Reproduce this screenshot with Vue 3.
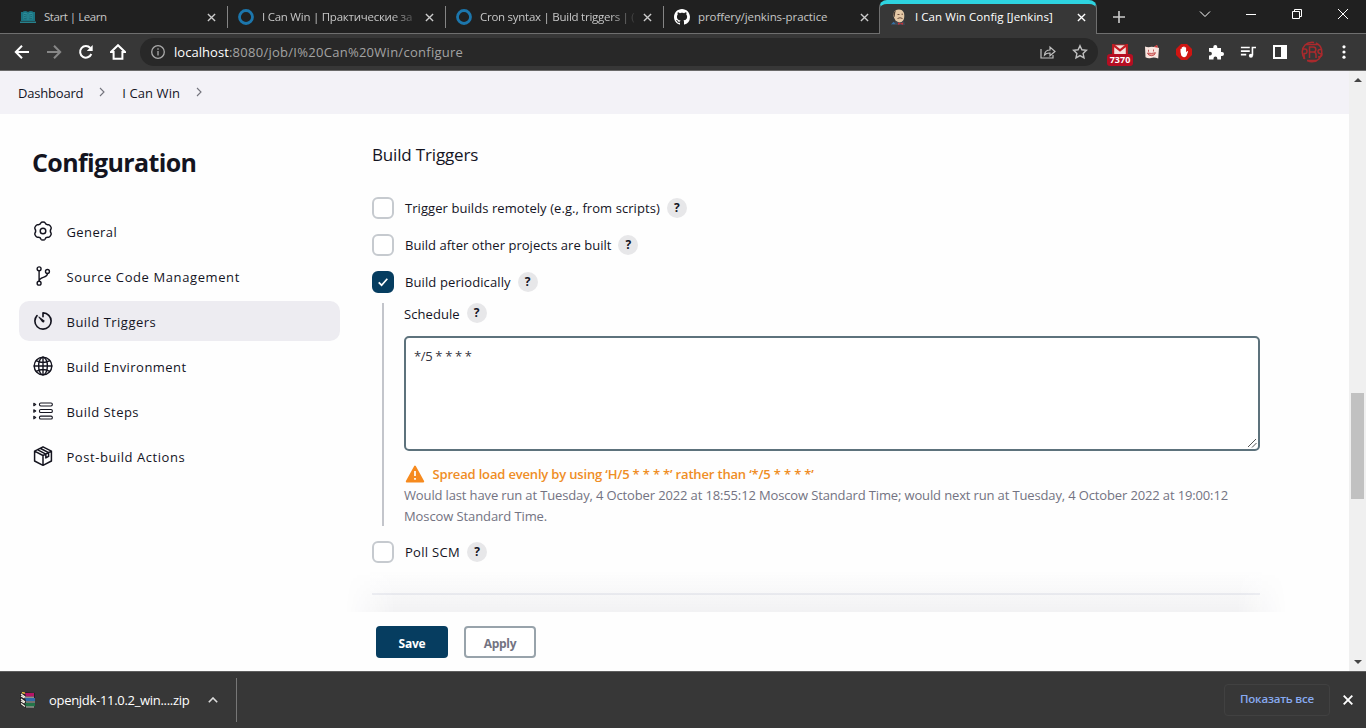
<script setup>
const nav = [
  { label: 'General', icon: 'gear', cls: 'n-general' },
  { label: 'Source Code Management', icon: 'branch', cls: 'n-scm' },
  { label: 'Build Triggers', icon: 'timer', cls: 'n-triggers', active: true },
  { label: 'Build Environment', icon: 'globe', cls: 'n-env' },
  { label: 'Build Steps', icon: 'list', cls: 'n-steps' },
  { label: 'Post-build Actions', icon: 'box', cls: 'n-post' },
]
const triggers = [
  { label: 'Trigger builds remotely (e.g., from scripts)', cls: 't-remote' },
  { label: 'Build after other projects are built', cls: 't-after' },
  { label: 'Build periodically', cls: 't-period', checked: true },
]
</script>

<template>
  <div class="window">
    <header class="tabstrip">
      <div class="tab">
        <svg class="fav" viewBox="0 0 16 16"><path d="M1 3h2V2.400Q6 1.600 8 3 10 1.600 13 2.400V3h2v9H1z" fill="#1b7482"/><path d="M3.500 4q2.500-.7 4 .7v6.500q-1.500-1.300-4-.7zM12.500 4q-2.500-.7-4 .7v6.500q1.500-1.300 4-.7z" fill="#2c8f9b"/><path d="M4 5.500l3 .6M4 7.500l3 .6M4 9.300l3 .6M12 5.500l-3 .6M12 7.500l-3 .6M12 9.300l-3 .6" stroke="#16606d" stroke-width=".8"/><path d="M0 12.500h16V14H0z" fill="#27818d"/></svg>
        <span class="title tt1">Start | Learn</span>
        <svg class="x" viewBox="0 0 10 10"><path d="M1 1l8 8M9 1L1 9"/></svg>
      </div>
      <div class="tab">
        <svg class="fav" viewBox="0 0 16 16"><circle cx="8" cy="8" r="6.500" fill="none" stroke="#1c76ac" stroke-width="2.800"/></svg>
        <span class="title fade tt2">I Can Win | Практические за</span>
        <svg class="x" viewBox="0 0 10 10"><path d="M1 1l8 8M9 1L1 9"/></svg>
      </div>
      <div class="tab">
        <svg class="fav" viewBox="0 0 16 16"><circle cx="8" cy="8" r="6.500" fill="none" stroke="#1c76ac" stroke-width="2.800"/></svg>
        <span class="title fade tt3">Cron syntax | Build triggers | (</span>
        <svg class="x" viewBox="0 0 10 10"><path d="M1 1l8 8M9 1L1 9"/></svg>
      </div>
      <div class="tab last">
        <svg class="fav" viewBox="0 0 16 16"><path fill="#fff" d="M8 0C3.580 0 0 3.580 0 8c0 3.540 2.290 6.530 5.470 7.590.4.07.55-.17.55-.38 0-.19-.01-.82-.01-1.490-2.010.37-2.530-.49-2.690-.94-.09-.23-.48-.94-.82-1.130-.28-.15-.68-.52-.01-.53.63-.01 1.080.58 1.230.82.72 1.210 1.870.87 2.330.66.07-.52.28-.87.51-1.070-1.780-.2-3.640-.89-3.640-3.950 0-.87.31-1.590.82-2.150-.08-.2-.36-1.020.08-2.120 0 0 .67-.21 2.200.82.64-.18 1.320-.27 2-.27s1.360.09 2 .27c1.530-1.040 2.200-.82 2.200-.82.44 1.100.16 1.920.08 2.120.51.56.82 1.270.82 2.150 0 3.070-1.870 3.750-3.650 3.950.29.25.54.73.54 1.480 0 1.070-.01 1.930-.01 2.200 0 .21.15.46.55.38A8.010 8.010 0 0016 8c0-4.420-3.580-8-8-8z"/></svg>
        <span class="title tt4">proffery/jenkins-practice</span>
        <svg class="x" viewBox="0 0 10 10"><path d="M1 1l8 8M9 1L1 9"/></svg>
      </div>
      <div class="tab active">
        <svg class="fav" viewBox="0 0 16 16"><path d="M2.500 7Q2 2 6 .8q5-1.200 7 3.200.8 4-.5 7-1.500 3-5 2.500Q4 12.500 2.500 7z" fill="#e4c8a6"/><path d="M2.600 6Q2 3 5 1.200q-1 2-1 4l-.4 3q-1-.6-1-2.200z" fill="#4a3b32"/><path d="M6.500 5.500h2M10.500 5.200h1.500M6.500 9.500q2.500-1.500 5 0" stroke="#6b4c3c" fill="none"/><path d="M2 16q.5-3 3-4l4 2 3-2q2 1 2 4z" fill="#414652"/><path d="M7 13.500l2.500 1 2.500-1v2.200l-2.500-.7-2.500.7z" fill="#c63137"/><path d="M0 15.500l2.500-2.700L4.500 15z" fill="#3471a4"/></svg>
        <span class="title tt5">I Can Win Config [Jenkins]</span>
        <svg class="x" viewBox="0 0 10 10"><path d="M1 1l8 8M9 1L1 9"/></svg>
      </div>
      <svg class="plus" viewBox="0 0 12 12"><path d="M6 0v12M0 6h12"/></svg>
      <div class="winctl">
        <svg viewBox="0 0 12 12"><path d="M1 3.500l5 5 5-5"/></svg>
        <svg viewBox="0 0 12 12"><path d="M1 6.500h10"/></svg>
        <svg viewBox="0 0 12 12"><path d="M1.500 3.500h7v7h-7zM3.500 3.500v-2h7v7h-2"/></svg>
        <svg viewBox="0 0 12 12"><path d="M1 1l10 10M11 1L1 11"/></svg>
      </div>
    </header>

    <div class="toolbar">
      <svg class="nv" viewBox="0 0 16 16"><path d="M15 8H2M8 1.800L1.800 8 8 14.200"/></svg>
      <svg class="nv dim" viewBox="0 0 16 16"><path d="M1 8h13M8 1.800L14.200 8 8 14.200"/></svg>
      <svg class="nv" viewBox="0 0 16 16"><path d="M13.300 10a5.800 5.800 0 1 1-1-6"/><path d="M14.700 1v6H8.800z" fill="#fff" stroke="none"/></svg>
      <svg class="nv" viewBox="0 0 16 16"><path d="M8 1.200L1 8h2.600v6.800h8.800V8H15z"/></svg>
      <div class="omni">
        <svg class="info" viewBox="0 0 16 16"><circle cx="8" cy="8" r="6.300"/><path d="M8 7v4.500M8 4.300v1.500"/></svg>
        <span class="url"><b>localhost</b>:8080/job/I%20Can%20Win/configure</span>
        <svg class="share" viewBox="0 0 16 16"><path d="M1 5v9h12v-3M4.500 11Q5 6 10 6V3l5 4.500-5 4.300V9q-3.500-.2-5.500 2z"/></svg>
        <svg class="star" viewBox="0 0 16 16"><path d="M8 1.700l1.900 4.100 4.500.5-3.300 3.100.9 4.400L8 11.600l-4 2.200.9-4.400L1.600 6.300l4.500-.5z"/></svg>
      </div>
      <div class="ext">
        <div class="mail">
          <svg viewBox="0 0 18 14"><path d="M1 1h16v12H1z" fill="#f3e3df"/><path d="M1 13V1l8 6.500L17 1v12" fill="none" stroke="#c51b22" stroke-width="2.500"/><path d="M2 1h14" stroke="#a9161c"/></svg>
          <span class="badge">7370</span>
        </div>
        <svg viewBox="0 0 16 16"><path d="M1 2.500q3 1.200 6.500.3L10 3l3-2 .7 2.500L15 4l-.8 10.500Q10 13 7 14q-3 .7-5.500-.7z" fill="#f9e5df"/><path d="M10 3l3-2.300.8 3z" fill="#cb3434"/><path d="M4.500 5.800v2M9.500 5.500v2M3.500 9q4 1 8-.3-.6 3-4 3t-4-2.700z" stroke="#b93436" stroke-width=".8" fill="#eaa19a"/></svg>
        <svg viewBox="0 0 16 16"><path d="M5 0h6l5 5v6l-5 5H5l-5-5V5z" fill="#cf1512"/><path d="M4.500 8V5q.7-.8 1.300 0V3.300q.8-.8 1.400 0V2.800q.8-.8 1.500 0v.7q.8-.7 1.400.1v4.600l1-1q1-.3.900.5L10.400 12q-2.600 2.500-5-.2z" fill="#fff"/></svg>
        <svg viewBox="0 0 16 16"><path d="M1 4h4.300V3a2 2 0 0 1 4 0v1H13v4h1a2 2 0 0 1 0 4h-1v3.500H9.300v-1a1.900 1.900 0 0 0-3.800 0v1H1v-4h1a1.900 1.900 0 0 0 0-3.800H1z" fill="#fff"/></svg>
        <svg viewBox="0 0 18 16"><path d="M1 3h10M1 7h10M1 11h6M14 12V3h4" stroke="#fff" stroke-width="1.800" fill="none"/><circle cx="12.300" cy="12.200" r="2.300" fill="#fff"/></svg>
        <svg viewBox="0 0 16 16"><path d="M1 1h14v14H1zM3 3v10h6V3z" fill="#fff" fill-rule="evenodd"/></svg>
        <svg class="avatar" viewBox="0 0 22 22"><circle cx="11" cy="11" r="9.800" stroke-dasharray="20 3 25 2"/><path d="M1 8h3q2 0 2 2.300T4 12.500H3V18M8.500 17V6h4q2.300 0 2.300 2.500T12.500 11H8.500m4 0q2.500 0 2.500 3v3M21 8.500h-2q-2 0-2 2t4 2.500q0 3-4 3M5 3.500h12M6 19.500h10"/></svg>
        <svg class="dots" viewBox="0 0 16 16"><circle cx="8" cy="2.800" r="1.600"/><circle cx="8" cy="8" r="1.600"/><circle cx="8" cy="13.200" r="1.600"/></svg>
      </div>
    </div>

    <div class="viewport">
      <div class="page">
        <nav class="crumbs">
          <span class="c1">Dashboard</span>
          <svg viewBox="0 0 6 10"><path d="M1 1l4 4-4 4"/></svg>
          <span class="c2">I Can Win</span>
          <svg viewBox="0 0 6 10"><path d="M1 1l4 4-4 4"/></svg>
        </nav>
        <div class="body">
          <aside class="side">
            <h1>Configuration</h1>
            <a v-for="n in nav" :key="n.label" class="item" :class="{ on: n.active }">
              <svg v-if="n.icon === 'gear'" class="gear" viewBox="0 0 20 20"><circle cx="10" cy="10" r="2.800"/><path d="M8 1.800Q8.300 1 10 1T12 1.800C12.600 3.600 13.600 4 15.400 3.700 16.600 3.400 18.600 6.400 18.200 7.400 17.100 9 17.100 11 18.200 12.600 18.600 13.600 16.600 16.600 15.400 16.300 13.600 16 12.600 16.400 12 18.200Q11.700 19 10 19T8 18.200C7.400 16.400 6.400 16 4.600 16.300 3.400 16.600 1.400 13.600 1.800 12.600 2.900 11 2.900 9 1.800 7.400 1.400 6.400 3.400 3.400 4.600 3.700 6.400 4 7.400 3.600 8 1.800Z"/></svg>
              <svg v-else-if="n.icon === 'branch'" viewBox="0 0 512 512"><circle cx="156" cy="72" r="50"/><circle cx="156" cy="440" r="50"/><circle cx="370" cy="140" r="50"/><path d="M156 122v268M370 190c0 130-214 70-214 200"/></svg>
              <svg v-else-if="n.icon === 'timer'" class="bold" viewBox="0 0 512 512"><path d="M103 118A208 208 0 0 0 48 254c-1 115 93 210 208 210s208-93 208-208c0-113-91-205-203-208h-5v100"/><path class="fill" d="M233 284L136 156q0-18 18-16l129 96a34 34 0 0 1-50 48z"/></svg>
              <svg v-else-if="n.icon === 'globe'" viewBox="0 0 512 512"><circle cx="256" cy="256" r="226"/><ellipse cx="256" cy="256" rx="112" ry="226"/><path d="M256 30v452M30 256h452M82 120q174 90 348 0M82 392q174-90 348 0"/></svg>
              <svg v-else-if="n.icon === 'list'" viewBox="0 0 512 512"><g class="thin"><rect x="165" y="50" width="330" height="76" rx="34"/><rect x="165" y="218" width="330" height="76" rx="34"/><rect x="165" y="386" width="330" height="76" rx="34"/><path d="M20 56l50 32-50 32zM20 224l50 32-50 32zM20 392l50 32-50 32z"/></g></svg>
              <svg v-else viewBox="16 16 480 480"><path d="M256 36l202 104v236L256 480 54 376V140zM54 140l202 104 202-104M256 244v236M120 105l204 106v92l66-36v-92L188 70"/></svg>
              <span :class="n.cls">{{ n.label }}</span>
            </a>
          </aside>
          <main class="main">
            <h2>Build Triggers</h2>
            <div v-for="t in triggers" :key="t.label" class="row">
              <span class="box" :class="{ checked: t.checked }"><svg v-if="t.checked" viewBox="0 0 12 12"><path d="M1.700 6.300l2.900 2.900 5.700-6.500"/></svg></span>
              <span class="lab" :class="t.cls">{{ t.label }}</span>
              <span class="help">?</span>
            </div>
            <section class="nested">
              <div class="sched"><span class="lab">Schedule</span><span class="help">?</span></div>
              <div class="area">
                <span>*/5 * * * *</span>
                <svg viewBox="0 0 10 10"><path d="M1 9l8-8M5 9.500L9.500 5"/></svg>
              </div>
              <div class="warn">
                <svg viewBox="0 0 20 18"><path d="M10 1.500L18.300 16.500H1.700z" fill="#f68a1e" stroke="#f68a1e" stroke-width="1.800" stroke-linejoin="round"/><path d="M10 6v5M10 13v1.800" stroke="#fff" stroke-width="1.700"/></svg>
                <strong>Spread load evenly by using ‘H/5 * * * *’ rather than ‘*/5 * * * *’</strong>
              </div>
              <p><span class="p1">Would last have run at Tuesday, 4 October 2022 at 18:55:12 Moscow Standard Time; would next run at Tuesday, 4 October 2022 at 19:00:12</span><br><span class="p2">Moscow Standard Time.</span></p>
            </section>
            <div class="row poll">
              <span class="box"></span><span class="lab t-poll">Poll SCM</span><span class="help">?</span>
            </div>
            <div class="rule"></div>
          </main>
        </div>
        <footer class="foot">
          <div class="buttons">
            <button class="save">Save</button>
            <button class="apply">Apply</button>
          </div>
        </footer>
      </div>
      <div class="scroll">
        <svg viewBox="0 0 8 4"><path d="M0 4l4-4 4 4z"/></svg>
        <div class="track"><div class="thumb"></div></div>
        <svg viewBox="0 0 8 4"><path d="M0 0l4 4 4-4z"/></svg>
      </div>
    </div>

    <div class="downloads">
      <svg class="rar" viewBox="0 0 16 16"><path d="M0 1l5-1 10 1v14l-9 1-6-3z" fill="#242024"/><path d="M5 1h9v3.500H6z" fill="#b51566"/><path d="M5 6h10v3H6z" fill="#2f6ba8"/><path d="M5 11h10v3.500H6z" fill="#227449"/><path d="M5 5.200h9M6 10h9M6 15h8" stroke="#d8d8cf" stroke-width=".9"/><path d="M1 2l4 3M1 7l4 3M1 11.500l4 3M1 4l3.500 2M1 9l3.500 2" stroke="#f5f1e7" stroke-width="1.200"/><path d="M2 .5l3 .8" stroke="#e6b93e" stroke-width="1.500"/></svg>
      <span class="file">openjdk-11.0.2_win....zip</span>
      <svg class="caret" viewBox="0 0 10 6"><path d="M.8 5.200L5 1l4.200 4.200"/></svg>
      <i class="sep"></i>
      <button class="all">Показать все</button>
      <svg class="close" viewBox="0 0 10 10"><path d="M.7.7l8.600 8.600M9.300.7L.7 9.300"/></svg>
    </div>
  </div>
</template>

<style>
html, body { margin: 0; overflow: hidden; }
</style>

<style scoped>
.window { width: 1366px; height: 728px; display: flex; flex-direction: column; overflow: hidden; font-family: "Open Sans", "Noto Sans", sans-serif; color: #14141f; background: #fefefe; }
.window * { box-sizing: border-box; }
svg { display: block; flex: none; }
span, strong { white-space: nowrap; }
button { font-family: inherit; padding: 0; }

.tabstrip { height: 34px; flex: none; display: flex; background: #202020; border-bottom: 1px solid #6f6f6f; color: #c6c6c6; font-size: 11.500px; }
.tab { width: 218px; padding: 1px 11px 0 10px; display: flex; align-items: center; flex: none; border-style: solid; border-width: 0 1px 0 0; border-image: linear-gradient(transparent 7px, #858585 7px, #858585 27px, transparent 27px) 1; }
.tab:first-child { width: 228px; padding-left: 20px; }
.tab.last { width: 216px; border: 0; padding-right: 11px; }
.fav { width: 16px; height: 16px; margin-right: 8px; }
.title { flex: 1; line-height: 18px; min-width: 0; }
.title.fade { -webkit-mask-image: linear-gradient(90deg, #000 84%, transparent 102%); mask-image: linear-gradient(90deg, #000 84%, transparent 102%); }
.tt1 { letter-spacing: -0.460px; }
.tt2 { letter-spacing: -0.250px; }
.tt3 { letter-spacing: -0.260px; }
.tt4 { letter-spacing: -0.090px; }
.tt5 { letter-spacing: 0.060px; }
.x { width: 9px; height: 9px; stroke: #ccc; stroke-width: 1.500; fill: none; margin-left: 8px; }
.tab.active { width: 218px; height: 34px; padding: 0 9px 4px 11px; background: #373737; border: 1px solid #6f6f6f; border-image: none; border-bottom: 0; border-top: 4px solid #2ed3e0; border-radius: 8px 8px 0 0; color: #fff; z-index: 1; margin-left: -1px; }
.active .x { stroke: #fff; margin-right: 1px; }
.plus { width: 12px; height: 12px; margin: 11px 0 0 16px; stroke: #ccc; stroke-width: 1.600; }
.winctl { margin-left: auto; margin-right: 17px; display: flex; gap: 34px; padding-top: 8px; }
.winctl svg { width: 12px; height: 12px; fill: none; stroke: #fff; stroke-width: 1; }

.toolbar { height: 37px; flex: none; background: #373737; border-bottom: 1px solid #6a6a6a; display: flex; align-items: center; padding: 0 14px; gap: 16px; }
.nv { width: 16px; height: 16px; fill: none; stroke: #fff; stroke-width: 2; }
.nv.dim { stroke: #878787; }
.omni { width: 958px; height: 28px; border-radius: 14px; background: #282828; display: flex; align-items: center; padding: 0 10px; margin-left: -2px; flex: none; }
.info { width: 16px; height: 16px; fill: none; stroke: #aaa; stroke-width: 1.300; margin-right: 8px; }
.url { flex: 1; font-size: 13px; color: #a3a3a3; letter-spacing: 0.270px; }
.url b { font-weight: 400; color: #fff; letter-spacing: 0.050px; }
.share, .star { width: 16px; height: 16px; fill: none; stroke: #c0c0c0; stroke-width: 1.200; margin-right: 16px; }
.star { margin-right: 0; stroke-width: 1.400; }
.ext { display: flex; align-items: center; gap: 16px; margin-left: -2px; }
.ext > svg { width: 16px; height: 16px; }
.mail { width: 16px; height: 16px; position: relative; }
.mail svg { width: 16px; height: 12px; }
.badge { position: absolute; left: -5px; top: 10px; width: 26px; height: 12px; background: #b50e22; border-radius: 3px; color: #fff; font-size: 9px; font-weight: 700; line-height: 12px; text-align: center; }
.ext > .avatar { width: 22px; height: 22px; fill: none; stroke: #a92a2d; stroke-width: 1.500; margin: 0 -3px; }
.dots { fill: #fff; }

.viewport { flex: 1; display: flex; min-height: 0; }
.page { flex: 1; display: flex; flex-direction: column; min-width: 0; }
.crumbs { height: 43px; flex: none; background: #f3f2f7; display: flex; align-items: center; padding: 1px 0 0 18px; font-size: 13px; }
.crumbs svg { width: 6px; height: 10px; fill: none; stroke: #73737c; stroke-width: 1.100; margin: -2px 17px 0 16px; }
.c1 { letter-spacing: -0.200px; }
.c2 { letter-spacing: 0.080px; }
.body { flex: 1; display: flex; min-height: 0; }
.side { width: 340px; padding: 31px 0 0 19px; flex: none; display: flex; flex-direction: column; gap: 5px; }
h1 { margin: 0 0 26px 13px; font-size: 25px; line-height: 35px; font-weight: 700; letter-spacing: -0.630px; }
.item { height: 40px; border-radius: 10px; display: flex; align-items: center; padding-left: 14px; font-size: 13px; font-weight: 500; }
.item.on { background: #edecf1; }
.item svg { width: 20px; height: 20px; margin: 0 13.500px 0 0; fill: none; stroke: #14141f; stroke-width: 36; stroke-linejoin: round; stroke-linecap: round; }
.item .gear { stroke-width: 1.450; }
.item .bold { stroke-width: 42; }
.item .fill { fill: #14141f; stroke: none; }
.item .thin { stroke-width: 28; }
.item span { letter-spacing: 0.400px; padding-top: 1px; }
.item .n-scm { letter-spacing: 0.600px; }
.item .n-triggers { letter-spacing: 0.480px; }
.item .n-env { letter-spacing: 0.460px; }
.item .n-steps { letter-spacing: 0.450px; }
.item .n-post { letter-spacing: 0.550px; }

.main { margin-left: 32px; width: 888px; display: flex; flex-direction: column; }
h2 { margin: 27px 0 26px; font-size: 17px; line-height: 27px; font-weight: 400; letter-spacing: -0.160px; }
.row { display: flex; align-items: center; height: 37px; font-size: 13px; }
h2 + .row { margin-top: -5px; }
.box { width: 22px; height: 22px; border: 2px solid #c6cacf; border-radius: 6px; margin-right: 11px; background: #fff; }
.box.checked { background: #063d60; border-color: #063d60; display: flex; align-items: center; justify-content: center; }
.box svg { width: 12px; height: 12px; fill: none; stroke: #fff; stroke-width: 1.700; }
.lab { letter-spacing: 0.070px; }
.t-after { letter-spacing: 0.030px; }
.t-period { letter-spacing: 0.110px; }
.t-poll { letter-spacing: 0.300px; }
.help { width: 20px; height: 20px; border-radius: 50%; background: #e7e7e9; font-size: 12px; line-height: 20px; font-weight: 700; text-align: center; margin-left: 7px; }
.nested { margin: 3px 0 0 10px; height: 223px; border-left: 2px solid #c3c5cb; padding-left: 20px; font-size: 13px; }
.sched { height: 33px; display: flex; align-items: flex-start; }
.sched .lab { line-height: 22px; }
.area { height: 115px; width: 856px; border: 2px solid #5d727c; border-radius: 5px; background: #fff; padding: 9px 8px; display: flex; justify-content: space-between; font-size: 13px; line-height: 18px; letter-spacing: -0.350px; color: #333340; }
.area svg { width: 10px; height: 10px; align-self: flex-end; margin: 0 -7px -8px 0; stroke: #555; fill: none; }
.warn { display: flex; align-items: center; margin-top: 12px; height: 21px; color: #ef8d25; }
.warn svg { width: 20px; height: 18px; margin: 0 7.500px 0 1px; }
.warn strong { font-weight: 600; letter-spacing: -0.170px; }
p { margin: 1px 0 0; line-height: 21px; color: #737382; }
.p1 { letter-spacing: -0.138px; }
.p2 { letter-spacing: -0.100px; }
.rule { height: 2px; background: #eff0f4; margin-top: 23px; }
.poll { margin-top: 7px; }

.foot { height: 59px; flex: none; position: relative; z-index: 1; background: #fefefe; }
.foot::before { content: ""; position: absolute; left: 345px; width: 942px; top: -42px; height: 42px; background: linear-gradient(transparent, rgba(20, 20, 50, 0.05)); -webkit-mask-image: linear-gradient(90deg, transparent, #000 50px, #000 892px, transparent); mask-image: linear-gradient(90deg, transparent, #000 50px, #000 892px, transparent); }
.buttons { padding: 14px 0 0 376px; display: flex; gap: 16px; }
.buttons button { width: 72px; height: 32px; border-radius: 4px; font-size: 12px; font-weight: 700; letter-spacing: -0.250px; padding-top: 2px; }
.save { border: 0; background: #063d60; color: #fff; }
.apply { background: #fff; border: 2px solid #98a3ab; color: #737382; }

.scroll { width: 17px; background: #f0f0f0; display: flex; flex-direction: column; align-items: center; padding: 7px 0; }
.scroll svg { width: 8px; height: 4px; fill: #454545; }
.track { flex: 1; width: 13px; }
.thumb { height: 106px; margin-top: 311px; background: #c1c1c1; }

.downloads { height: 57px; flex: none; background: #373737; border-top: 1px solid #5e5e5e; display: flex; align-items: center; padding: 0 13px 0 20px; color: #fff; }
.rar { width: 16px; height: 16px; margin-right: 13px; }
.file { font-size: 13px; width: 140px; letter-spacing: -0.300px; }
.caret { width: 10px; height: 6px; margin-left: 19px; fill: none; stroke: #ddd; stroke-width: 1.600; }
.sep { width: 1px; height: 44px; background: #777; margin-left: 18px; }
.all { margin-left: auto; width: 106px; height: 32px; border: 1px solid #414141; border-radius: 4px; background: transparent; color: #87aaf0; font-size: 11.500px; font-weight: 600; letter-spacing: -0.200px; padding-bottom: 3px; }
.close { width: 10px; height: 10px; margin-left: 13px; fill: none; stroke: #fff; stroke-width: 1.900; }
</style>
